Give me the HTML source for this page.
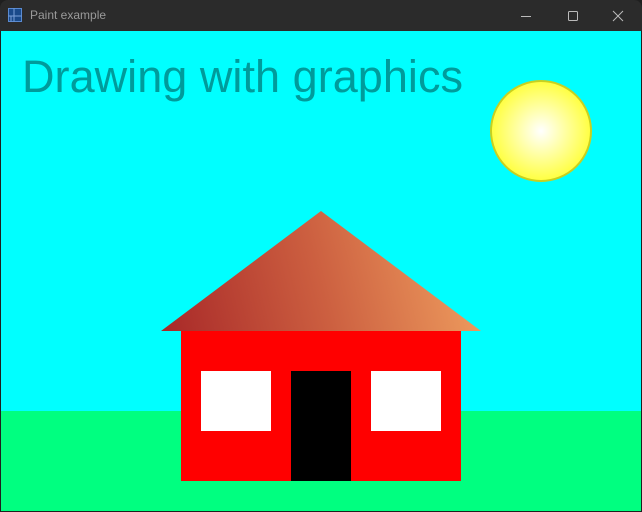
<!DOCTYPE html>
<html><head><style>
html,body{margin:0;padding:0;width:642px;height:512px;overflow:hidden;background:#1f1f1f}
#tb{position:absolute;left:0;top:0;width:642px;height:31px;background:#2b2b2b;border-radius:8px 8px 0 0}
#tt{position:absolute;left:30px;top:8px;font:12px "Liberation Sans",sans-serif;color:#9a9a9a}
</style></head><body>
<div id="tb">
<svg style="position:absolute;left:8px;top:8px" width="14" height="14" viewBox="0 0 14 14">
<rect x="0.5" y="0.5" width="13" height="13" fill="#1a4a8a" stroke="#5a8ad0"/>
<path d="M6 0.5V13.5M0.5 8H13.5M3 8V13.5" stroke="#7aa0d8" fill="none"/>
</svg>
<div id="tt">Paint example</div>
<svg style="position:absolute;left:520px;top:9px" width="110" height="14" viewBox="0 0 110 14">
<path d="M1 7.5H11" stroke="#bbb" stroke-width="1"/>
<rect x="48.5" y="2.5" width="9" height="9" rx="1" fill="none" stroke="#bbb"/>
<path d="M93 2L103 12M103 2L93 12" stroke="#bbb"/>
</svg>
</div>
<svg style="position:absolute;left:1px;top:31px" width="640" height="480" viewBox="1 31 640 480">
<defs>
<radialGradient id="sun" cx="0.5" cy="0.5" r="0.5"><stop offset="0" stop-color="#ffffff"/><stop offset="1" stop-color="#ffff40"/></radialGradient>
<linearGradient id="roof" x1="161" y1="331" x2="481" y2="251" gradientUnits="userSpaceOnUse"><stop offset="0" stop-color="#a82828"/><stop offset="0.5" stop-color="#cc5f40"/><stop offset="1" stop-color="#f0a060"/></linearGradient>
</defs>
<rect x="1" y="31" width="640" height="480" fill="#00ffff"/>
<rect x="1" y="411" width="640" height="100" fill="#00ff80"/>
<text x="22" y="92" font-family="Liberation Sans, sans-serif" font-size="45" fill="#009b9b" textLength="441">Drawing with graphics</text>
<circle cx="541" cy="131" r="50" fill="url(#sun)" stroke="#c8d020" stroke-width="2"/>
<polygon points="161,331 321,211 481,331" fill="url(#roof)"/>
<rect x="181" y="331" width="280" height="150" fill="#ff0000"/>
<rect x="201" y="371" width="70" height="60" fill="#fff"/>
<rect x="371" y="371" width="70" height="60" fill="#fff"/>
<rect x="291" y="371" width="60" height="110" fill="#000"/>
</svg>
</body></html>
